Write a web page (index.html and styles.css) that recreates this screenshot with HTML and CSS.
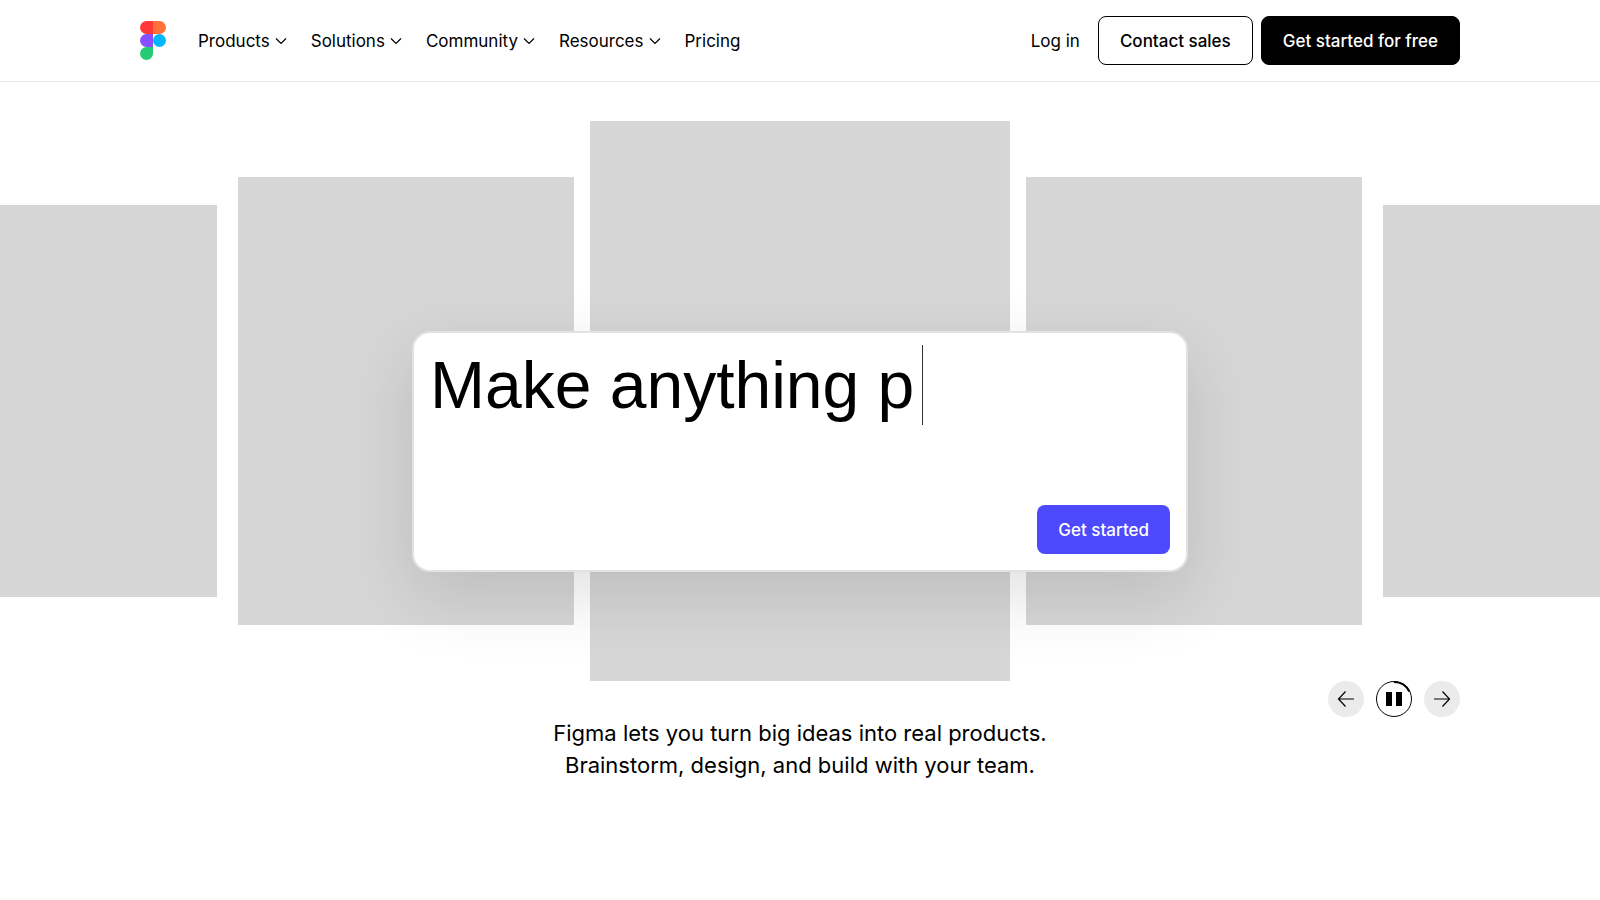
FILE: index.html
```html
<!DOCTYPE html>
<html lang="en">
<head>
<meta charset="utf-8">
<title>Figma</title>
<meta name="viewport" content="width=device-width, initial-scale=1">
<link rel="stylesheet" href="styles.css">
</head>
<body>
<header class="site-header">
  <div class="container header-row">
    <a class="logo" href="#" aria-label="Figma home">
      <svg width="26" height="39" viewBox="0 0 26 39" aria-hidden="true">
        <path fill="#ff3737" d="M6.500 0H13V13H6.500A6.500 6.500 0 0 1 6.500 0Z"/>
        <path fill="#ff7237" d="M13 0H19.500A6.500 6.500 0 0 1 19.500 13H13Z"/>
        <path fill="#874fff" d="M6.500 13H13V26H6.500A6.500 6.500 0 0 1 6.500 13Z"/>
        <circle fill="#00b6ff" cx="19.500" cy="19.500" r="6.500"/>
        <path fill="#24cb71" d="M6.500 26H13V32.500A6.500 6.500 0 1 1 6.500 26Z"/>
      </svg>
    </a>
    <nav class="main-nav" aria-label="Main">
      <button class="nav-item" type="button">Products<svg class="chevron" viewBox="0 0 12 12" aria-hidden="true"><path d="M1 3.500 6 8.500 11 3.500"/></svg></button>
      <button class="nav-item" type="button">Solutions<svg class="chevron" viewBox="0 0 12 12" aria-hidden="true"><path d="M1 3.500 6 8.500 11 3.500"/></svg></button>
      <button class="nav-item" type="button">Community<svg class="chevron" viewBox="0 0 12 12" aria-hidden="true"><path d="M1 3.500 6 8.500 11 3.500"/></svg></button>
      <button class="nav-item" type="button">Resources<svg class="chevron" viewBox="0 0 12 12" aria-hidden="true"><path d="M1 3.500 6 8.500 11 3.500"/></svg></button>
      <a class="nav-item" href="#">Pricing</a>
    </nav>
    <div class="actions">
      <a class="login" href="#">Log in</a>
      <button class="btn btn-outline" type="button">Contact sales</button>
      <button class="btn btn-dark" type="button">Get started for free</button>
    </div>
  </div>
</header>
<main>
  <section class="hero">
    <div class="stage">
      <div class="carousel">
        <div class="slide slide-far"></div>
        <div class="slide slide-near"></div>
        <div class="slide slide-main"></div>
        <div class="slide slide-near"></div>
        <div class="slide slide-far"></div>
      </div>
      <div class="prompt">
        <h1 class="prompt-text">Make anything p<span class="caret"></span></h1>
        <button class="btn btn-accent" type="button">Get started</button>
      </div>
    </div>
    <div class="container controls">
      <button class="round" type="button" aria-label="Previous"><svg viewBox="0 0 36 36" aria-hidden="true"><path class="line" d="M26 18H10.500M17.500 10.500 10.500 18 17.500 25.500"/></svg></button>
      <button class="round round-pause" type="button" aria-label="Pause"><svg viewBox="0 0 36 36" aria-hidden="true"><circle class="ring" cx="18" cy="18" r="17.500"/><path class="progress" d="M18 1A17 17 0 0 1 33.300 10.500"/><path d="M10 11H16V25H10ZM20 11H26V25H20Z"/></svg></button>
      <button class="round" type="button" aria-label="Next"><svg viewBox="0 0 36 36" aria-hidden="true"><path class="line" d="M10 18H25.500M18.500 10.500 25.500 18 18.500 25.500"/></svg></button>
    </div>
    <p class="tagline">Figma lets you turn big ideas into real products.<br>Brainstorm, design, and build with your team.</p>
  </section>
</main>
</body>
</html>
```
FILE: styles.css
```css
* { box-sizing: border-box; }

body {
  margin: 0;
  background: #fff;
  color: #000;
  font-family: Inter, "Liberation Sans", sans-serif;
  font-size: 17px;
  line-height: 24px;
}

a { color: inherit; text-decoration: none; }

button {
  margin: 0;
  padding: 0;
  border: 0;
  background: none;
  color: inherit;
  font: inherit;
  cursor: pointer;
}

.container {
  width: 100%;
  max-width: 1352px;
  margin: 0 auto;
  padding: 0 16px;
}

.site-header { border-bottom: 1px solid #e6e6e6; }

.header-row {
  display: flex;
  align-items: center;
  padding-top: 16px;
  padding-bottom: 16px;
}

.logo { display: flex; margin-right: 32px; }

.main-nav { display: flex; gap: 24px; }

.nav-item {
  display: flex;
  align-items: center;
  gap: 5px;
}

.chevron {
  width: 12px;
  height: 12px;
  fill: none;
  stroke: #000;
  stroke-width: 1.2;
}

.actions {
  display: flex;
  align-items: center;
  gap: 8px;
  margin-left: auto;
}

.login { margin-right: 10px; }

.btn {
  height: 49px;
  padding: 0 21px;
  border: 1px solid #000;
  border-radius: 8px;
  font-weight: 500;
  white-space: nowrap;
}

.btn-dark { background: #000; color: #fff; }
.btn-accent { border: 0; background: #4d49fc; color: #fff; }

.hero { padding-top: 39px; overflow: hidden; }

.stage { position: relative; }

.carousel {
  display: flex;
  align-items: center;
  justify-content: center;
}

.slide { flex: none; background: #d6d6d6; }
.slide-main { width: 420px; height: 560px; margin: 0 16px; }
.slide-near { width: 336px; height: 448px; }
.slide-far { width: 294px; height: 392px; }
.slide-far:first-child { margin-right: 21px; }
.slide-far:last-child { margin-left: 21px; }

.prompt {
  position: absolute;
  top: 210px;
  left: 50%;
  transform: translateX(-50%);
  display: flex;
  flex-direction: column;
  justify-content: space-between;
  width: 776px;
  max-width: 100%;
  min-height: 241px;
  padding: 12px 16px 16px;
  border: 2px solid #e2e2e2;
  border-radius: 18px;
  background: #fff;
  box-shadow: 0 24px 70px rgba(0, 0, 0, 0.12);
}

.prompt-text {
  display: flex;
  gap: 8px;
  margin: 0;
  font-family: "Liberation Sans", Arial, sans-serif;
  font-size: 66px;
  font-weight: 400;
  line-height: 80px;
}

.caret { width: 1px; height: 80px; background: #333; }

.btn-accent { align-self: flex-end; }

.controls {
  display: flex;
  justify-content: flex-end;
  gap: 12px;
}

.round {
  width: 36px;
  height: 36px;
  border-radius: 50%;
  background: #ebebeb;
}

.round svg { display: block; }
.round-pause { background: #fff; }
.line { fill: none; stroke: #000; stroke-width: 1.2; }
.ring { fill: none; stroke: #000; }
.progress { fill: none; stroke: #000; stroke-width: 2; }

.tagline {
  margin: 0;
  font-size: 22px;
  line-height: 32px;
  text-align: center;
}
```
